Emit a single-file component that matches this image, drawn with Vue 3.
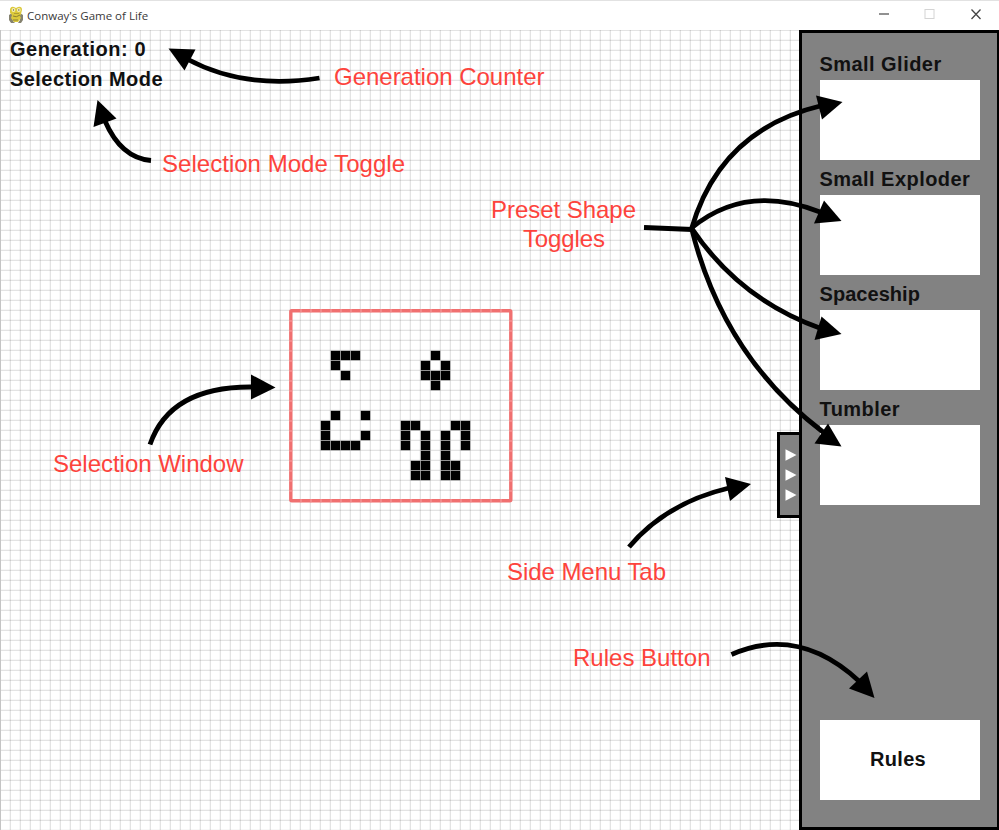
<script setup>
const presets = [
  { name: 'Small Glider' },
  { name: 'Small Exploder' },
  { name: 'Spaceship', tight: true },
  { name: 'Tumbler' },
]

// Live cells, keyed by grid row
const rows = {
  32: [33, 34, 35, 43],
  33: [33, 42, 44],
  34: [34, 42, 43, 44],
  35: [43],
  38: [33, 36],
  39: [32, 40, 41, 45, 46],
  40: [32, 36, 40, 42, 44, 46],
  41: [32, 33, 34, 35, 40, 42, 44, 46],
  42: [42, 44],
  43: [41, 42, 44, 45],
  44: [41, 42, 44, 45],
}
const cells = Object.entries(rows).flatMap(([r, cols]) => cols.map((c) => ({ x: c * 10 + 0.8, y: r * 10 + 0.8 })))

const arrows = [
  { d: 'M319.5 78Q245 90 187 59', head: '168.5,48.5 195.5,49.5 184.5,70.5' },
  { d: 'M151 160.5Q121 158 105 121', head: '97.5,100 93.5,127 116.5,118.5' },
  { d: 'M691.5 229Q720 129.6 822 105.5', head: '842.5,102 816,95.5 822,119.5' },
  { d: 'M691.5 228Q746 183 820 212', head: '841.5,221 824,200.5 814,223.5' },
  { d: 'M691.5 228Q740 300 821 328.5', head: '841.5,334 821.5,316.5 814.5,340' },
  { d: 'M691.5 228Q723 356 823 432', head: '841.5,446.5 828,423.5 814.5,443.5' },
  { d: 'M150 444.5Q170 386 253 387', head: '275.5,387.5 251,374.5 251,399.5' },
  { d: 'M629 547Q666 503 729 488', head: '751,484 725,477 730,501' },
  { d: 'M731.5 654.5Q799 625 860 682', head: '874.5,698 867,671.5 849,688.5' },
]

const notes = [
  { t: 'Generation Counter', x: 334, y: 84.5, w: 210.5 },
  { t: 'Selection Mode Toggle', x: 162, y: 171.5, w: 243 },
  { t: 'Preset Shape', x: 491, y: 218, w: 145 },
  { t: 'Toggles', x: 523, y: 247, w: 82 },
  { t: 'Selection Window', x: 53, y: 471.5, w: 190.5 },
  { t: 'Side Menu Tab', x: 507, y: 579.5, w: 159 },
  { t: 'Rules Button', x: 573, y: 665.5, w: 137.5 },
]
</script>

<template>
  <div class="window">
    <header class="titlebar">
      <svg class="logo" width="16" height="18" viewBox="0 0 16 18">
        <path d="M1 9l3-2 1 8 2 2H3l-2-3zM12 7l3 2v5l-2 3h-3l2-3z" fill="#85826f" />
        <path d="M2 3q1-3 4-2l2 1 2-1q4-1 4 3l-1 4-1 2 1 2-3 4H6l-3-4 1-3-2-2z" fill="#dcc93c" />
        <path d="M5 10q3 2 7-1M5 14h5" stroke="#8c8030" fill="none" />
        <circle cx="5.5" cy="4" r="1.9" fill="#f4efbe" />
        <circle cx="10.8" cy="4" r="1.9" fill="#f4efbe" />
        <circle cx="5.5" cy="4" r=".7" fill="#6d683d" />
        <circle cx="10.8" cy="4" r=".7" fill="#6d683d" />
        <path d="M6 7.5h5" stroke="#b09d35" />
      </svg>
      <span class="title">Conway's Game of Life</span>
      <svg class="controls" width="112" height="20" viewBox="0 0 112 20">
        <path d="M4 9h10" stroke="#555" stroke-width="1.3" />
        <rect x="50" y="4.5" width="9" height="9" fill="none" stroke="#d4d4d4" />
        <path d="M96.5 4.5l9 9.5M105.5 4.5L96.5 14" stroke="#444" stroke-width="1.3" />
      </svg>
    </header>

    <main class="game">
      <section class="board">
        <div class="status">Generation: 0</div>
        <div class="status">Selection Mode</div>
        <svg class="cells" width="799" height="800" viewBox="0 0 799 800">
          <rect v-for="c in cells" :key="c.x + '-' + c.y" :x="c.x" :y="c.y" width="9.4" height="9.4" />
          <rect class="sel" x="290.8" y="280.8" width="220" height="190" rx="1" />
          <path class="ticks" d="M300.5 280.8H505M300.5 470.8H505" />
          <path class="ticks" d="M290.8 290.5V465M510.8 290.5V465" />
        </svg>
        <div class="tab">
          <svg v-for="i in 3" :key="i" width="12" height="12" viewBox="0 0 12 12">
            <path d="M.5.3L11.5 6 .5 11.7z" fill="#fff" />
          </svg>
        </div>
      </section>

      <aside class="menu">
        <div v-for="p in presets" :key="p.name" class="preset">
          <div class="name" :class="{ tight: p.tight }">{{ p.name }}</div>
          <div class="box"></div>
        </div>
        <button class="box rules">Rules</button>
      </aside>
    </main>

    <svg class="notes" width="999" height="830" viewBox="0 0 999 830">
      <path class="line" d="M644 227.5L692.5 229.5" />
      <g v-for="a in arrows" :key="a.d">
        <path class="line" :d="a.d" />
        <polygon :points="a.head" />
      </g>
      <text v-for="n in notes" :key="n.t" :x="n.x" :y="n.y" :textLength="n.w">{{ n.t }}</text>
    </svg>
  </div>
</template>

<style>
body {
  margin: 0;
  overflow: hidden;
}
</style>

<style scoped>
.window {
  position: relative;
  display: flex;
  flex-direction: column;
  width: 999px;
  height: 830px;
  background: #fff;
  font-family: "Liberation Sans", Arial, sans-serif;
}
.titlebar {
  display: flex;
  align-items: center;
  box-sizing: border-box;
  height: 30px;
  padding: 0 12px 1px 8px;
  border-top: 1px solid #e2e2e2;
}
.title {
  margin-left: 3px;
  font: 11.5px "Open Sans", "Noto Sans", sans-serif;
  color: #3a3a3a;
}
.controls {
  margin-left: auto;
}
.game {
  display: flex;
  height: 800px;
}
.board {
  position: relative;
  box-sizing: border-box;
  width: 799px;
  padding: 4px 0 0 10px;
  background-image:
    linear-gradient(90deg, #c4c4c4 1px, transparent 1px),
    linear-gradient(90deg, rgba(0, 0, 0, 0.11) 1px, transparent 1px, transparent 9px, rgba(0, 0, 0, 0.03) 9px),
    linear-gradient(180deg, rgba(0, 0, 0, 0.11) 1px, transparent 1px, transparent 9px, rgba(0, 0, 0, 0.03) 9px);
  background-size: 799px 800px, 10px 10px, 10px 10px;
}
.status,
.name,
.rules {
  font: bold 20px/30px "Liberation Sans", Arial, sans-serif;
  letter-spacing: 0.45px;
  color: #111;
}
.status:first-child {
  letter-spacing: 0.55px;
}
.cells {
  position: absolute;
  left: 0;
  top: 0;
}
.sel {
  fill: none;
  stroke: #f07070;
  stroke-width: 3.4;
}
.ticks {
  fill: none;
  stroke: #f3a0a0;
  stroke-width: 3.4;
  stroke-dasharray: 1 9;
}
.tab {
  position: absolute;
  right: 0;
  top: 402px;
  display: flex;
  flex-direction: column;
  align-items: center;
  justify-content: center;
  gap: 8px;
  box-sizing: border-box;
  width: 22px;
  height: 86px;
  padding: 0 0 1px 2px;
  border: 3px solid #000;
  border-right: 0;
  background: #828282;
}
.menu {
  display: flex;
  flex-direction: column;
  box-sizing: border-box;
  width: 200px;
  height: 800px;
  padding: 18px 17px 27px 18px;
  border: 3px solid #000;
  border-right-width: 2px;
  background: #828282;
}
.preset {
  margin-bottom: 6px;
}
.name {
  height: 29px;
  margin-left: -0.5px;
  line-height: 26px;
}
.name.tight {
  letter-spacing: 0.05px;
}
.box {
  width: 160px;
  height: 80px;
  background: #fff;
}
.rules {
  margin-top: auto;
  padding: 0 4px 2px 0;
  border: 0;
  letter-spacing: 0.3px;
}
.notes {
  position: absolute;
  left: 0;
  top: 0;
}
.notes .line {
  fill: none;
  stroke: #000;
  stroke-width: 4.8;
}
.notes text {
  font-size: 24px;
  fill: #fd433c;
}
</style>
